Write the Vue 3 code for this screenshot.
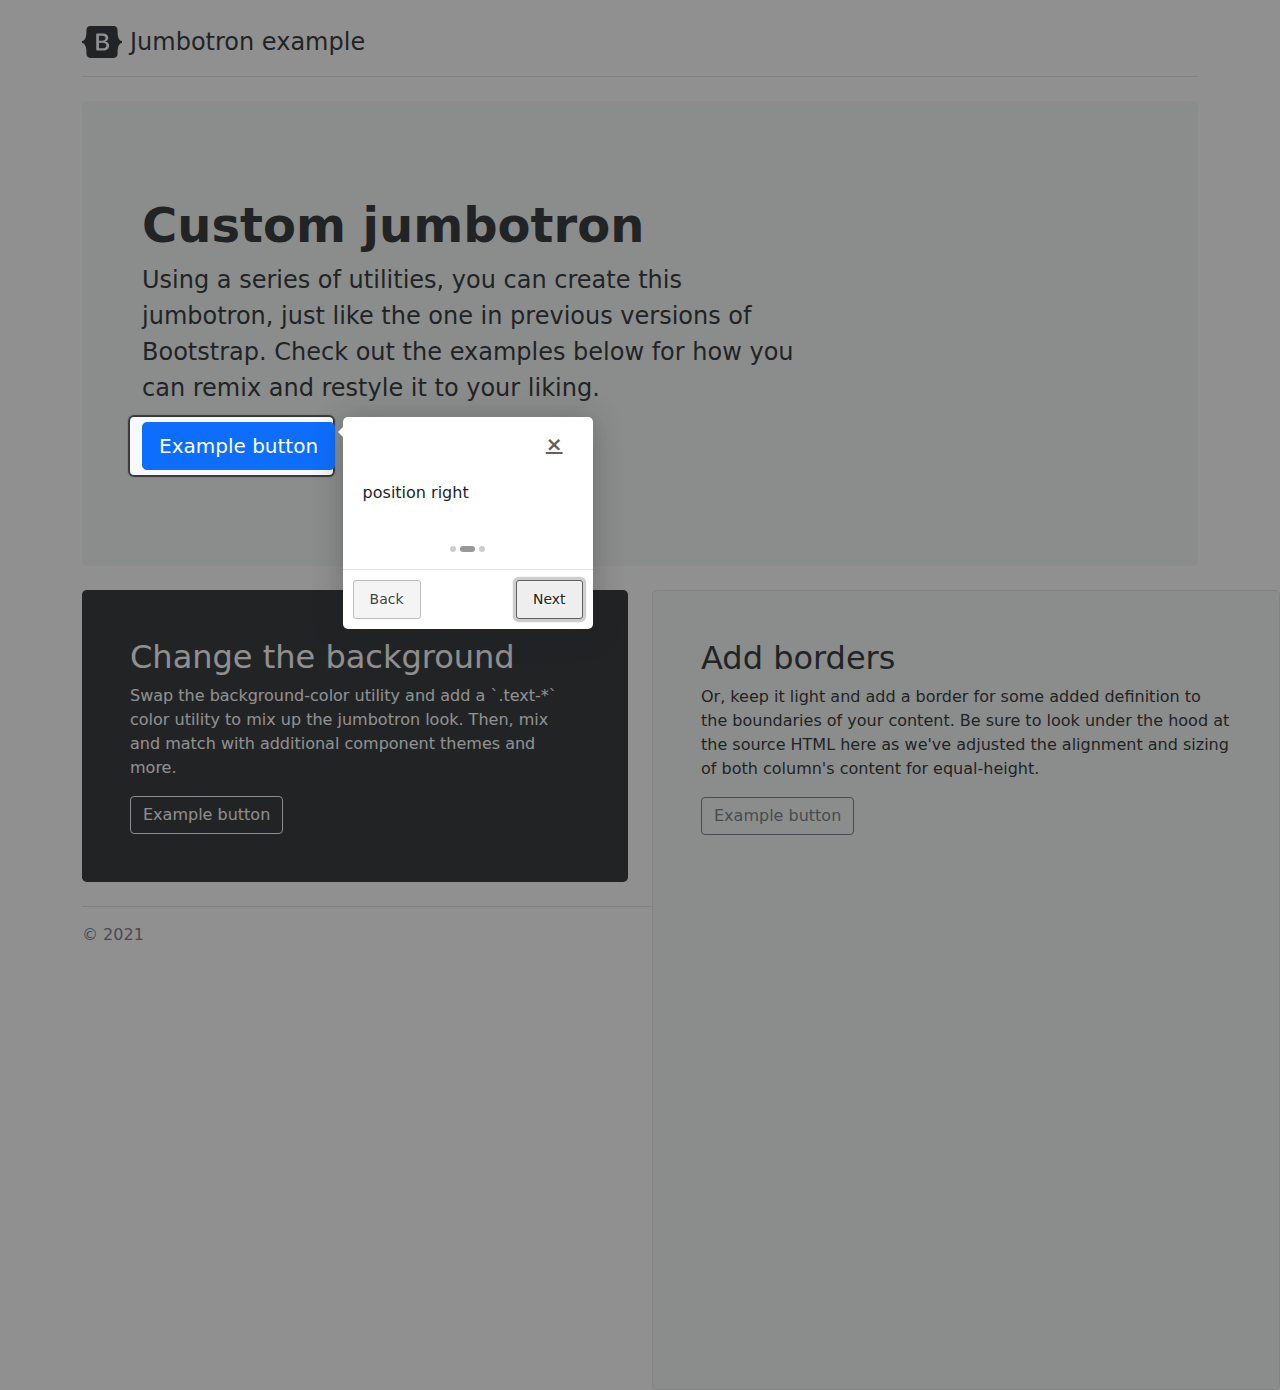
<script setup>
const bullets = [false, true, false]
</script>

<template>
  <main class="page">
    <div class="container">
      <header class="header">
        <svg class="logo" width="40" height="32" viewBox="0 0 118 94" role="img" aria-label="Bootstrap">
          <path fill-rule="evenodd" clip-rule="evenodd" fill="currentColor" d="M24.509 0c-6.733 0-11.715 5.893-11.492 12.284.214 6.14-.064 14.092-2.066 20.577C8.943 39.365 5.547 43.485 0 44.014v5.972c5.547.529 8.943 4.649 10.951 11.153 2.002 6.485 2.28 14.437 2.066 20.577C12.794 88.106 17.776 94 24.51 94H93.5c6.733 0 11.714-5.893 11.491-12.284-.214-6.14.064-14.092 2.066-20.577 2.009-6.504 5.396-10.624 10.943-11.153v-5.972c-5.547-.529-8.934-4.649-10.943-11.153-2.002-6.484-2.28-14.437-2.066-20.577C105.214 5.894 100.233 0 93.5 0H24.508zM80 57.863C80 66.663 73.436 72 62.543 72H44a2 2 0 01-2-2V24a2 2 0 012-2h18.437c9.083 0 15.044 4.92 15.044 12.474 0 5.302-4.01 10.049-9.119 10.88v.277C75.317 46.394 80 51.21 80 57.863zM60.521 28.34H49.948v14.934h8.905c6.884 0 10.68-2.772 10.68-7.727 0-4.643-3.264-7.207-9.012-7.207zM49.948 49.2v16.458H60.91c7.167 0 10.964-2.876 10.964-8.281 0-5.406-3.903-8.178-11.425-8.178H49.948z" />
        </svg>
        <span>Jumbotron example</span>
      </header>

      <section class="jumbotron">
        <h1>Custom jumbotron</h1>
        <p>Using a series of utilities, you can create this jumbotron, just like the one in previous versions of Bootstrap. Check out the examples below for how you can remix and restyle it to your liking.</p>
        <button class="btn btn-primary" type="button">Example button</button>
      </section>

      <div class="row">
        <section class="card card-dark">
          <h2>Change the background</h2>
          <p>Swap the background-color utility and add a `.text-*` color utility to mix up the jumbotron look. Then, mix and match with additional component themes and more.</p>
          <button class="btn btn-light" type="button">Example button</button>
        </section>
        <section class="card card-bordered">
          <h2>Add borders</h2>
          <p>Or, keep it light and add a border for some added definition to the boundaries of your content. Be sure to look under the hood at the source HTML here as we've adjusted the alignment and sizing of both column's content for equal-height.</p>
          <button class="btn btn-secondary" type="button">Example button</button>
        </section>
      </div>

      <footer class="footer">© 2021</footer>
    </div>

    <div class="tour-highlight"></div>

    <div class="tour-tooltip" role="dialog">
      <div class="tour-arrow"></div>
      <div class="tour-header"><a class="tour-skip" role="button">×</a></div>
      <div class="tour-text">position right</div>
      <div class="tour-bullets">
        <span v-for="(active, i) in bullets" :key="i" class="bullet" :class="{ active }"></span>
      </div>
      <div class="tour-buttons">
        <a class="tour-button tour-back" role="button">Back</a>
        <a class="tour-button tour-next" role="button">Next</a>
      </div>
    </div>
  </main>
</template>

<style>
body {
  margin: 0;
  background: #fff;
}
</style>

<style scoped>
* {
  box-sizing: border-box;
}
.page {
  position: relative;
  height: 1390px;
  overflow: hidden;
  background: #fff;
  color: #212529;
  font-family: "DejaVu Sans", sans-serif;
  font-size: 16px;
  line-height: 1.5;
}
.container {
  width: 1140px;
  margin: 0 auto;
  padding: 24px 12px;
}
.header {
  display: flex;
  align-items: center;
  gap: 8px;
  padding-bottom: 16px;
  margin-bottom: 24px;
  border-bottom: 1px solid #dee2e6;
  font-size: 24px;
}
.logo {
  display: block;
}
h1,
h2 {
  margin: 0 0 8px;
  line-height: 1.2;
}
h1 {
  font-size: 48px;
  font-weight: 700;
  line-height: 57px;
}
h2 {
  font-size: 32px;
  font-weight: 500;
}
p {
  margin: 0 0 16px;
}
.jumbotron {
  padding: 96px 60px;
  margin-bottom: 24px;
  border-radius: 4.8px;
  background: #f5f9f6;
}
.jumbotron p {
  width: 664px;
  font-size: 24px;
}
.btn {
  display: block;
  padding: 6px 12px;
  border: 1px solid;
  border-radius: 4px;
  background: transparent;
  font: inherit;
}
.btn-primary {
  position: relative;
  z-index: 2;
  padding: 8px 16px;
  border-color: #0d6efd;
  border-radius: 4.8px;
  background: #0d6efd;
  color: #fff;
  font-size: 20px;
}
.btn-light {
  color: #f8f9fa;
}
.btn-secondary {
  color: #6c757d;
}
.row {
  display: flex;
  gap: 24px;
  height: 292.4px;
}
.card {
  flex: none;
  padding: 48px;
  border-radius: 4.8px;
}
.card-dark {
  width: 546px;
  background: #212529;
  color: #fff;
}
.card-bordered {
  position: relative;
  width: 628px;
  height: 800px;
  border: 1px solid #dee2e6;
  background: #f5f9f6;
}
.footer {
  margin-top: 24px;
  padding-top: 16px;
  border-top: 1px solid #dee2e6;
  color: #6c757d;
}

/* Guided tour layers */
.tour-highlight {
  position: absolute;
  z-index: 1;
  top: 417px;
  left: 130px;
  width: 203px;
  height: 58px;
  border-radius: 4px;
  background: #f8f9fa;
  box-shadow: rgba(33, 33, 33, 0.8) 0 0 1px 2px, rgba(33, 33, 33, 0.5) 0 0 0 5000px;
}
.tour-tooltip {
  position: absolute;
  z-index: 3;
  top: 417px;
  left: 342.6px;
  width: 250px;
  height: 212px;
  border-radius: 5px;
  background: #fff;
  box-shadow: 0 3px 30px rgba(33, 33, 33, 0.3);
}
.tour-arrow {
  position: absolute;
  top: 10px;
  left: -10px;
  border: 5px solid transparent;
  border-right-color: #fff;
}
.tour-header {
  display: flex;
  justify-content: flex-end;
  padding: 12px 30px 0;
}
.tour-skip {
  color: #616161;
  font-size: 20px;
  font-weight: 700;
  text-decoration: underline;
  text-decoration-thickness: 2px;
}
.tour-text {
  padding: 22px 20px 0;
}
.tour-bullets {
  display: flex;
  justify-content: center;
  gap: 4px;
  padding: 41px 0 17px;
}
.bullet {
  width: 6px;
  height: 6px;
  border-radius: 10px;
  background: #ccc;
}
.bullet.active {
  width: 15px;
  background: #999;
}
.tour-buttons {
  display: flex;
  justify-content: space-between;
  padding: 10px;
  border-top: 1px solid #e0e0e0;
}
.tour-button {
  padding: 8px 16px;
  border: 1px solid #bdbdbd;
  border-radius: 3px;
  background: #f4f4f4;
  color: #424242;
  font-size: 14px;
  line-height: 21px;
  text-shadow: 1px 1px 0 #fff;
}
.tour-next {
  border-color: #616161;
  background: #eee;
  color: #212121;
  box-shadow: 0 0 0 3.2px rgba(158, 158, 158, 0.5);
}
</style>
